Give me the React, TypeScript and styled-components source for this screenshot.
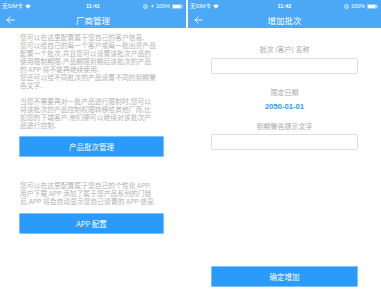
import React from "react";
import styled, { createGlobalStyle } from "styled-components";

const GlobalStyle = createGlobalStyle`
  html, body {
    margin: 0;
    padding: 0;
    background: #ffffff;
  }
  * {
    box-sizing: border-box;
  }
`;

const Page = styled.div`
  display: flex;
  gap: 2px;
  width: 381px;
  height: 290px;
  background: #ffffff;
  font-family: "Noto Sans CJK SC", "Noto Sans", sans-serif;
  overflow: hidden;
`;

const Screen = styled.div<{ $width: number }>`
  display: flex;
  flex-direction: column;
  width: ${(p) => p.$width}px;
  height: 290px;
  background: #ffffff;
`;

const StatusBar = styled.div`
  position: relative;
  display: flex;
  align-items: center;
  justify-content: space-between;
  height: 12px;
  padding: 0 3px 0 2px;
  background: #4aa8f7;
  color: #ffffff;
  font-size: 5.5px;
  font-family: "Liberation Sans", "Noto Sans CJK SC", sans-serif;
`;

const StatusGroup = styled.div`
  display: flex;
  align-items: center;
  gap: 2px;
`;

const Clock = styled.div`
  position: absolute;
  left: 0;
  right: 0;
  text-align: center;
  font-weight: bold;
  pointer-events: none;
`;

const Header = styled.div`
  position: relative;
  display: flex;
  align-items: center;
  justify-content: center;
  height: 16px;
  background: #4aa8f7;
  color: #ffffff;
  font-size: 8.5px;
`;

const Back = styled.div`
  position: absolute;
  left: 6px;
  top: 4px;
  display: flex;
`;

const Body = styled.div`
  display: flex;
  flex-direction: column;
  padding: 5px 22px 0 19px;
`;

const Paragraph = styled.p<{ $gap?: number }>`
  margin: 0 0 ${(p) => p.$gap ?? 0}px 0;
  color: #b2b2b2;
  font-size: 6.8px;
  line-height: 8px;
  white-space: pre-line;
  padding-left: 1px;
`;

const Button = styled.button<{ $gap?: number }>`
  display: flex;
  align-items: center;
  justify-content: center;
  width: 100%;
  height: 21px;
  margin-bottom: ${(p) => p.$gap ?? 0}px;
  border: 1px solid #7cc2ff;
  border-radius: 1px;
  background: #2a9bfa;
  color: #ffffff;
  font-size: 7.5px;
  font-family: "Noto Sans CJK SC", "Liberation Sans", sans-serif;
  padding: 0;
`;

const Form = styled.div`
  display: flex;
  flex: 1;
  flex-direction: column;
  align-items: stretch;
  padding: 17px 23px 3px 23px;
`;

const Label = styled.div<{ $top: number }>`
  margin-top: ${(p) => p.$top}px;
  text-align: center;
  color: #a8a8a8;
  font-size: 7px;
  line-height: 9px;
`;

const Input = styled.div<{ $top: number }>`
  margin-top: ${(p) => p.$top}px;
  height: 16px;
  border: 1px solid #dedede;
  border-radius: 2px;
  background: #ffffff;
`;

const DateValue = styled.div`
  margin-top: 5px;
  text-align: center;
  color: #2a9bfa;
  font-size: 7.6px;
  font-weight: bold;
  line-height: 9px;
  font-family: "Liberation Sans", sans-serif;
`;

const Spacer = styled.div`
  flex: 1;
`;

const Wifi = () => (
  <svg width="6" height="5" viewBox="0 0 12 10">
    <path d="M6 9.5 L0.5 3.5 A8 8 0 0 1 11.5 3.5 Z" fill="#ffffff" />
  </svg>
);

const Lock = () => (
  <svg width="5" height="5" viewBox="0 0 10 10">
    <circle cx="5" cy="5" r="4" fill="none" stroke="#ffffff" strokeWidth="1.4" />
    <rect x="3.5" y="4" width="3" height="2.5" fill="#ffffff" />
  </svg>
);

const Arrow = () => (
  <svg width="4" height="5" viewBox="0 0 10 10">
    <path d="M9.5 0.5 L0.5 4.5 L5 5 L5.5 9.5 Z" fill="#ffffff" />
  </svg>
);

const Battery = () => (
  <svg width="11" height="5" viewBox="0 0 22 10">
    <rect x="0.5" y="0.5" width="18" height="9" rx="1.5" fill="none" stroke="#ffffff" />
    <rect x="2" y="2" width="15" height="6" fill="#ffffff" />
    <rect x="19.5" y="3" width="1.5" height="4" fill="#ffffff" />
  </svg>
);

const BackArrow = () => (
  <svg width="9" height="8" viewBox="0 0 18 16">
    <path
      d="M17 8 H2 M8.5 1.5 L2 8 L8.5 14.5"
      fill="none"
      stroke="#ffffff"
      strokeWidth="1.8"
      strokeLinecap="round"
      strokeLinejoin="round"
    />
  </svg>
);

const Top = ({ time, title, location }: { time: string; title: string; location?: boolean }) => (
  <>
    <StatusBar>
      <StatusGroup>
        <span>无SIM卡</span>
        <Wifi />
      </StatusGroup>
      <Clock>{time}</Clock>
      <StatusGroup>
        <Lock />
        {location && <Arrow />}
        <span>100%</span>
        <Battery />
      </StatusGroup>
    </StatusBar>
    <Header>
      <Back>
        <BackArrow />
      </Back>
      {title}
    </Header>
  </>
);

export default function App() {
  return (
    <>
      <GlobalStyle />
      <Page>
        <Screen $width={186}>
          <Top time="11:41" title="厂商管理" location />
          <Body>
            <Paragraph $gap={8}>
              {"您可以在这里配置属于您自己的客户信息.\n您可以给自己的每一个客户或每一批出货产品\n配置一个批次,并且您可以设置该批次产品的\n使用限制期限.产品期限到期后该批次的产品\n的 APP 将不能再继续使用.\n您还可以给不同批次的产品设置不同的到期警\n告文字."}
            </Paragraph>
            <Paragraph $gap={7}>
              {"当您不需要再对一批产品进行限制时,您可以\n将该批次的产品控制权限转移给其他厂商,比\n如您的下端客户,他们便可以继续对该批次产\n品进行控制."}
            </Paragraph>
            <Button $gap={24}>产品批次管理</Button>
            <Paragraph $gap={8}>
              {"您可以在这里配置属于您自己的个性化 APP.\n用户下载 APP 添加了属于您产品系列的门锁\n后,APP 将会自动显示您自己设置的 APP 信息."}
            </Paragraph>
            <Button>APP 配置</Button>
          </Body>
        </Screen>
        <Screen $width={193}>
          <Top time="11:42" title="增加批次" />
          <Form>
            <Label $top={0}>批次 (客户) 名称</Label>
            <Input $top={4} />
            <Label $top={14}>限定日期</Label>
            <DateValue>2050-01-01</DateValue>
            <Label $top={11}>到期警告提示文字</Label>
            <Input $top={3} />
            <Spacer />
            <Button>确定增加</Button>
          </Form>
        </Screen>
      </Page>
    </>
  );
}
